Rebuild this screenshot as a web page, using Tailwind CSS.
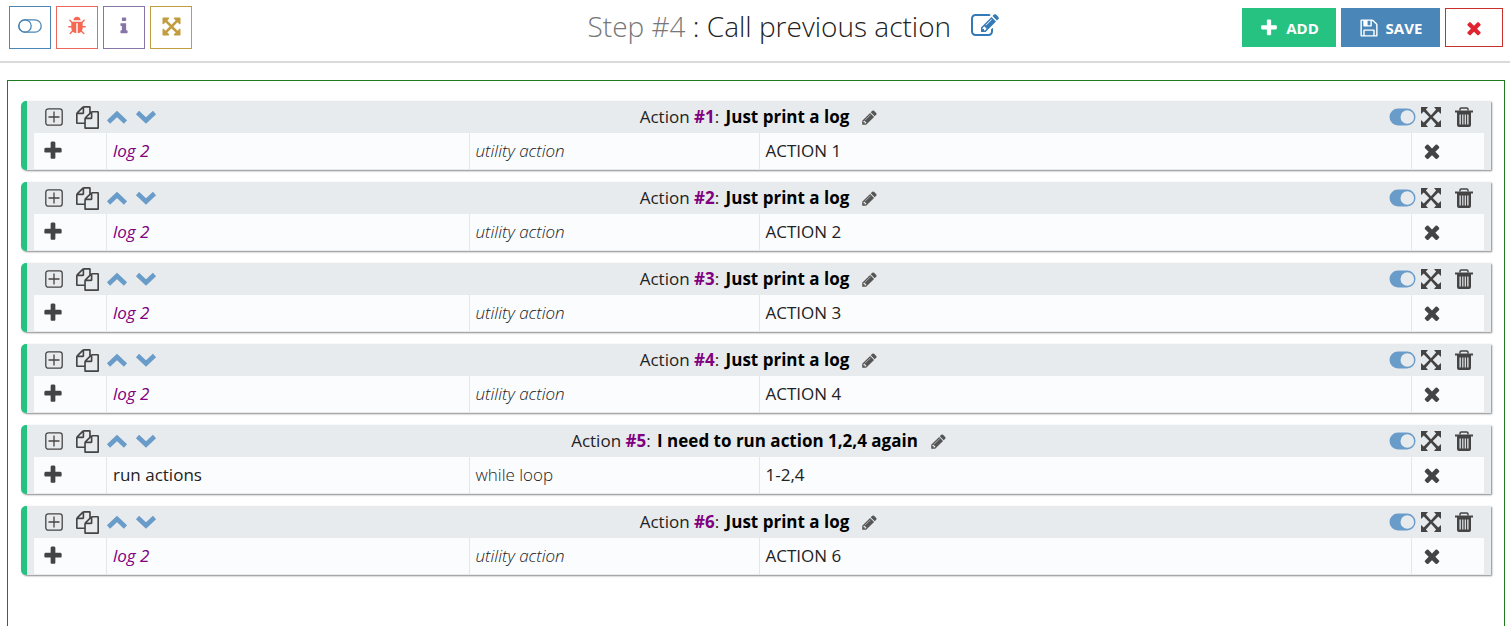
<!DOCTYPE html>
<html lang="en">
<head>
  <meta charset="UTF-8">
  <meta name="viewport" content="width=device-width, initial-scale=1.0">
  <title>Step #4 : Call previous action</title>
  <script src="https://cdn.jsdelivr.net/npm/@tailwindcss/browser@4"></script>
</head>
<body class="bg-white min-h-screen flex flex-col font-['Open_Sans',sans-serif] text-[17px] leading-6 text-[#222]">

  <!-- Icon set -->
  <svg class="hidden" aria-hidden="true">
    <symbol id="plus" viewBox="0 0 1792 1792"><path d="M1600 736v192q0 40-28 68t-68 28h-416v416q0 40-28 68t-68 28h-192q-40 0-68-28t-28-68v-416h-416q-40 0-68-28t-28-68v-192q0-40 28-68t68-28h416v-416q0-40 28-68t68-28h192q40 0 68 28t28 68v416h416q40 0 68 28t28 68z"/></symbol>
    <symbol id="times" viewBox="0 0 1792 1792"><path d="M1490 1322q0 40-28 68l-136 136q-28 28-68 28t-68-28l-294-294-294 294q-28 28-68 28t-68-28l-136-136q-28-28-28-68t28-68l294-294-294-294q-28-28-28-68t28-68l136-136q28-28 68-28t68 28l294 294 294-294q28-28 68-28t68 28l136 136q28 28 28 68t-28 68l-294 294 294 294q28 28 28 68z"/></symbol>
    <symbol id="save" viewBox="0 0 1792 1792"><path d="M512 1536h768v-384h-768v384zm896 0h128v-896q0-14-10-38.5t-20-34.5l-281-281q-10-10-34-20t-39-10v416q0 40-28 68t-68 28h-576q-40 0-68-28t-28-68v-416h-128v1280h128v-416q0-40 28-68t68-28h832q40 0 68 28t28 68v416zm-384-928v-320q0-13-9.5-22.5t-22.5-9.5h-192q-13 0-22.5 9.5t-9.5 22.5v320q0 13 9.5 22.5t22.5 9.5h192q13 0 22.5-9.5t9.5-22.5zm640 32v928q0 40-28 68t-68 28h-1344q-40 0-68-28t-28-68v-1344q0-40 28-68t68-28h928q40 0 88 20t76 48l280 280q28 28 48 76t20 88z"/></symbol>
    <symbol id="info" viewBox="0 0 1792 1792"><path d="M1216 1344v128q0 26-19 45t-45 19h-512q-26 0-45-19t-19-45v-128q0-26 19-45t45-19h64v-384h-64q-26 0-45-19t-19-45v-128q0-26 19-45t45-19h384q26 0 45 19t19 45v576h64q26 0 45 19t19 45zm-128-1152v192q0 26-19 45t-45 19h-256q-26 0-45-19t-19-45v-192q0-26 19-45t45-19h256q26 0 45 19t19 45z"/></symbol>
    <symbol id="arrows" viewBox="0 0 1792 1792"><path d="M1411 541l-355 355 355 355 144-144q29-31 70-14 39 17 39 59v448q0 26-19 45t-45 19h-448q-42 0-59-40-17-39 14-69l144-144-355-355-355 355 144 144q31 30 14 69-17 40-59 40h-448q-26 0-45-19t-19-45v-448q0-42 40-59 39-17 69 14l144 144 355-355-355-355-144 144q-19 19-45 19-12 0-24-5-40-17-40-59v-448q0-26 19-45t45-19h448q42 0 59 40 17 39-14 69l-144 144 355 355 355-355-144-144q-31-30-14-69 17-40 59-40h448q26 0 45 19t19 45v448q0 42-39 59-13 5-25 5-26 0-45-19z"/></symbol>
    <symbol id="bug" viewBox="0 0 1792 1792"><path d="M1696 960q0 26-19 45t-45 19h-224q0 171-67 290l208 209q19 19 19 45t-19 45q-18 19-45 19t-45-19l-198-197q-5 5-15 13t-42 28.5-65 36.5-82 29-97 13v-896h-128v896q-51 0-101.5-13.5t-87-33-66-39-43.5-32.5l-15-14-183 207q-20 21-48 21-24 0-43-16-19-18-20.5-44.5t15.5-46.5l202-227q-58-114-58-274h-224q-26 0-45-19t-19-45 19-45 45-19h224v-294l-173-173q-19-19-19-45t19-45 45-19 45 19l173 173h844l173-173q19-19 45-19t45 19 19 45-19 45l-173 173v294h224q26 0 45 19t19 45zm-480-576h-640q0-133 93.5-226.5t226.5-93.5 226.5 93.5 93.5 226.5z"/></symbol>
    <symbol id="pencil" viewBox="0 0 1792 1792"><path d="M491 1536l91-91-235-235-91 91v107h128v128h107zm523-928q0-22-22-22-10 0-17 7l-542 542q-7 7-7 17 0 22 22 22 10 0 17-7l542-542q7-7 7-17zm-54-192l416 416-832 832h-416v-416zm683 96q0 53-37 90l-166 166-416-416 166-165q36-38 90-38 53 0 91 38l235 234q37 39 37 91z"/></symbol>
    <symbol id="edit" viewBox="0 0 1792 1792"><path d="M888 1184l116-116-152-152-116 116v56h96v96h56zm440-720q-16-16-33 1l-350 350q-17 17-1 33t33-1l350-350q17-17 1-33zm80 594v190q0 119-84.5 203.5t-203.5 84.5h-832q-119 0-203.5-84.5t-84.5-203.5v-832q0-119 84.5-203.5t203.5-84.5h832q63 0 117 25 15 7 18 23 3 17-9 29l-49 49q-14 14-32 8-23-6-45-6h-832q-66 0-113 47t-47 113v832q0 66 47 113t113 47h832q66 0 113-47t47-113v-126q0-13 9-22l64-64q15-15 35-7t20 29zm-96-738l288 288-672 672h-288v-288zm444 132l-92 92-288-288 92-92q28-28 68-28t68 28l152 152q28 28 28 68t-28 68z"/></symbol>
    <symbol id="copy" viewBox="0 0 1792 1792"><path d="M1696 384q40 0 68 28t28 68v1216q0 40-28 68t-68 28h-960q-40 0-68-28t-28-68v-288h-544q-40 0-68-28t-28-68v-672q0-40 20-88t48-76l408-408q28-28 76-48t88-20h416q40 0 68 28t28 68v328q68-40 128-40h416zm-544 213l-299 299h299v-299zm-640-384l-299 299h299v-299zm196 647l316-316v-416h-384v416q0 40-28 68t-68 28h-416v640h512v-256q0-40 20-88t48-76zm956 804v-1152h-384v416q0 40-28 68t-68 28h-416v640h896z"/></symbol>
    <symbol id="up" viewBox="0 0 22 18"><path d="M2.500 14L11 6l8.500 8" fill="none" stroke="currentColor" stroke-width="4.600"/></symbol>
    <symbol id="down" viewBox="0 0 22 18"><path d="M2.500 4.500l8.500 8 8.500-8" fill="none" stroke="currentColor" stroke-width="4.600"/></symbol>
    <symbol id="expand" viewBox="0 0 20 20"><path d="M0 0h7L4.900 2.600 10 8.200l5.100-5.600L13 0h7v7l-2.700-2.500L11.800 10l5.500 5.500L20 13v7h-7l2.100-2.600L10 11.800l-5.100 5.600L7 20H0v-7l2.700 2.500L8.200 10 2.700 4.500 0 7z"/></symbol>
    <symbol id="trash" viewBox="0 0 18 20"><path d="M5 3.500V2.200Q5 1 6.200 1h5.600Q13 1 13 2.200v1.300" fill="none" stroke="currentColor" stroke-width="1.500"/><path d="M0 3.500h18v2H0z"/><path fill-rule="evenodd" d="M2 5h14v13q0 2-2 2H4q-2 0-2-2zM4.500 7.500v10h1.300v-10zm2.700 0v10h1.200v-10zm2.500 0v10h1.200v-10zm2.500 0v10h1.300v-10z"/></symbol>
    <symbol id="box-plus" viewBox="0 0 18 18"><g fill="none" stroke="currentColor" stroke-width="1.300"><rect x=".8" y=".8" width="16.400" height="16.400" rx="2.500"/><path d="M9 3.500v11M3.500 9h11"/></g></symbol>
    <symbol id="toggle-off" viewBox="0 0 24 14"><g fill="none" stroke="currentColor" stroke-width="1.300"><rect x=".8" y=".8" width="22.400" height="12.400" rx="6.200"/><circle cx="7" cy="7" r="6.200"/></g></symbol>
    <symbol id="toggle-on" viewBox="0 0 27 18"><path fill-rule="evenodd" d="M9 .5h9a8.500 8.500 0 0 1 0 17H9a8.500 8.500 0 0 1 0-17zM18.300 2.200a6.800 6.800 0 1 0 0 13.600 6.800 6.800 0 0 0 0-13.600z"/></symbol>
  </svg>

  <!-- Toolbar -->
  <header class="h-[63px] border-b-2 border-[#dadada] grid grid-cols-[25%_55%_20%] items-start pl-[9px] pr-[7px] pt-[6px]">
    <div class="flex gap-[5px]">
      <button type="button" aria-label="Toggle" class="w-[42px] h-[43px] border border-[#4b86b4] text-[#4b86b4] flex items-center justify-center pb-[3px]"><svg class="w-6 h-[14px] fill-current"><use href="#toggle-off"/></svg></button>
      <button type="button" aria-label="Debug" class="w-[42px] h-[43px] border border-[#e9695c] text-[#f56954] flex items-center justify-center pb-[3px]"><svg class="size-5 fill-current"><use href="#bug"/></svg></button>
      <button type="button" aria-label="Info" class="w-[42px] h-[43px] border border-[#8775a7] text-[#8775a7] flex items-center justify-center pb-[3px]"><svg class="size-5 fill-current"><use href="#info"/></svg></button>
      <button type="button" aria-label="Expand all" class="w-[42px] h-[43px] border border-[#c29d40] text-[#c29d40] flex items-center justify-center pb-[3px]"><svg class="size-[21px] fill-current"><use href="#arrows"/></svg></button>
    </div>

    <div class="flex items-center justify-center gap-5">
      <h1 class="text-[28px] leading-10 font-light text-[#222]"><span class="text-[#777]">Step #4</span> : Call previous action</h1>
      <button type="button" aria-label="Edit step name" class="text-[#337ab7]"><svg class="size-7 fill-current"><use href="#edit"/></svg></button>
    </div>

    <div class="flex justify-end gap-[5px] pt-[2px] text-white text-[15px] font-bold">
      <button type="button" class="h-[39px] w-[94px] bg-[#26c281] flex items-center justify-center gap-[7px]"><svg class="size-5 fill-current"><use href="#plus"/></svg>ADD</button>
      <button type="button" class="h-[39px] w-[99px] bg-[#4b86b8] flex items-center justify-center gap-[7px]"><svg class="size-5 fill-current"><use href="#save"/></svg>SAVE</button>
      <button type="button" aria-label="Close" class="h-[39px] w-[58px] bg-white border border-[#c9302c] text-[#e12330] flex items-center justify-center"><svg class="size-5 fill-current"><use href="#times"/></svg></button>
    </div>
  </header>

  <!-- Actions -->
  <main id="actions" class="flex-1 mt-[17px] ml-[7px] mr-[5px] border border-b-0 border-[#1e7b1e] px-[13px] pt-5 flex flex-col gap-3"></main>

  <script>
    const actions = [
      { title: 'Just print a log', name: 'log 2', type: 'utility action', value: 'ACTION 1' },
      { title: 'Just print a log', name: 'log 2', type: 'utility action', value: 'ACTION 2' },
      { title: 'Just print a log', name: 'log 2', type: 'utility action', value: 'ACTION 3' },
      { title: 'Just print a log', name: 'log 2', type: 'utility action', value: 'ACTION 4' },
      { title: 'I need to run action 1,2,4 again', name: 'run actions', type: 'while loop', value: '1-2,4', loop: true },
      { title: 'Just print a log', name: 'log 2', type: 'utility action', value: 'ACTION 6' }
    ];

    document.getElementById('actions').innerHTML = actions.map((action, i) => `
      <section class="bg-[#e8ebee] border-l-6 border-[#26c281] rounded-l-[5px] shadow-[1px_1px_2px_#888] pl-[7px] pr-[7px] pb-px">
        <div class="h-8 grid grid-cols-[1fr_auto_1fr] items-center text-[#444]">
          <div class="flex items-center pl-[11px]">
            <button type="button" aria-label="Expand action" class="mr-[13px]"><svg class="size-[18px] fill-current"><use href="#box-plus"/></svg></button>
            <button type="button" aria-label="Copy action" class="mr-[7px]"><svg class="size-[23px] fill-current"><use href="#copy"/></svg></button>
            <button type="button" aria-label="Move up" class="mr-[7px] text-[#6a9cc9]"><svg class="w-[22px] h-[18px]"><use href="#up"/></svg></button>
            <button type="button" aria-label="Move down" class="text-[#6a9cc9]"><svg class="w-[22px] h-[18px]"><use href="#down"/></svg></button>
          </div>
          <div class="flex items-center gap-3">
            <h2 class="text-[#222]">Action <b class="text-[#800080]">#${i + 1}</b>: <b class="ml-[2px] text-black">${action.title}</b></h2>
            <button type="button" aria-label="Rename action" class="text-[#555]"><svg class="size-[17px] fill-current"><use href="#pencil"/></svg></button>
          </div>
          <div class="flex items-center justify-end pr-[11px]">
            <button type="button" aria-label="Enabled" class="mr-[5px] text-[#6a9cc9]"><svg class="w-[27px] h-[18px] fill-current"><use href="#toggle-on"/></svg></button>
            <button type="button" aria-label="Full screen" class="mr-[14px]"><svg class="size-5 fill-current"><use href="#expand"/></svg></button>
            <button type="button" aria-label="Delete action"><svg class="w-[18px] h-5 fill-current"><use href="#trash"/></svg></button>
          </div>
        </div>
        <table class="w-full table-fixed h-9 bg-[#fbfcfe] text-[#222]">
          <tr>
            <td class="w-[5%] pl-2"><button type="button" aria-label="Add row" class="block text-[#444]"><svg class="size-[22px] fill-current"><use href="#plus"/></svg></button></td>
            <td class="w-[25%] border-l border-[#e4e7ea] pl-[6px] ${action.loop ? '' : 'italic text-[#800080]'}">${action.name}</td>
            <td class="w-[20%] border-l border-[#e4e7ea] pl-[6px] font-light ${action.loop ? '' : 'italic'}">${action.type}</td>
            <td class="w-[45%] border-l border-[#e4e7ea] pl-[6px]">${action.value}</td>
            <td class="w-[5%] border-l border-[#e4e7ea] pl-[9px]"><button type="button" aria-label="Remove row" class="block text-[#444]"><svg class="size-[22px] fill-current"><use href="#times"/></svg></button></td>
          </tr>
        </table>
      </section>
    `).join('');
  </script>

</body>
</html>
